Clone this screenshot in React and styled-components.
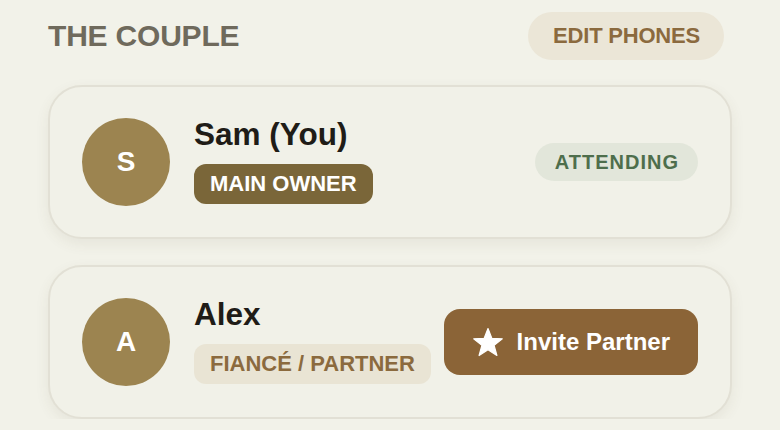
import React from 'react'
import styled, { createGlobalStyle } from 'styled-components'

const Global = createGlobalStyle`
  html, body {
    margin: 0;
    background: #f2f2e9;
    font-family: "Liberation Sans", Arial, sans-serif;
  }
`

const Page = styled.div`
  padding: 12px 48px 0;
`

const Header = styled.div`
  display: flex;
  align-items: center;
  justify-content: space-between;
  height: 48px;
  padding-right: 8px;
  margin-bottom: 25px;
`

const Title = styled.h2`
  margin: 0;
  font-size: 30px;
  font-weight: 700;
  letter-spacing: -0.2px;
  color: #6f6a5c;
`

const EditButton = styled.button`
  height: 48px;
  padding: 0 24px 0 25px;
  border: none;
  border-radius: 24px;
  background: #ebe6d7;
  color: #8b6a3e;
  font-family: inherit;
  font-size: 22px;
  font-weight: 700;
  letter-spacing: -0.2px;
  cursor: pointer;
`

const List = styled.div`
  display: flex;
  flex-direction: column;
  gap: 26px;
`

const Card = styled.div`
  display: flex;
  align-items: center;
  padding: 29px 32px;
  border: 2px solid #e2e0d5;
  border-radius: 34px;
  background: #f1f1e8;
  box-shadow: 0 5px 14px rgba(90, 80, 50, 0.08);
`

const Avatar = styled.div`
  flex: none;
  width: 88px;
  height: 88px;
  border-radius: 50%;
  background: #9c8450;
  color: #fff;
  display: flex;
  align-items: center;
  justify-content: center;
  font-size: 28px;
  font-weight: 700;
`

const Info = styled.div`
  flex: 1;
  margin-left: 24px;
  padding-bottom: 4px;
  display: flex;
  flex-direction: column;
  align-items: flex-start;
  gap: 12px;
`

const Name = styled.div`
  font-size: 31.5px;
  line-height: 36px;
  font-weight: 700;
  color: #1f1c17;
`

const Role = styled.span`
  height: 40px;
  padding: 0 16px;
  border-radius: 12px;
  display: flex;
  align-items: center;
  font-size: 22px;
  font-weight: 700;
  background: ${({ $owner }) => ($owner ? '#7a6639' : '#e9e4d4')};
  color: ${({ $owner }) => ($owner ? '#fff' : '#8b6a3e')};
`

const Status = styled.span`
  height: 38px;
  padding: 0 19px 0 20px;
  border-radius: 19px;
  display: flex;
  align-items: center;
  background: #e2e6da;
  color: #4e6e4c;
  font-size: 20px;
  font-weight: 700;
  letter-spacing: 1px;
`

const InviteButton = styled.button`
  height: 66px;
  padding: 0 28px;
  border: none;
  border-radius: 16px;
  background: #8b6437;
  color: #fff;
  display: flex;
  align-items: center;
  gap: 13px;
  font-family: inherit;
  font-size: 24px;
  font-weight: 700;
  cursor: pointer;
`

const Star = () => (
  <svg width="32" height="30" viewBox="0 0 32 30">
    <polygon
      points="16,1.5 19.8,11.3 30.3,11.8 22.1,18.4 24.9,28.5 16,22.8 7.1,28.5 9.9,18.4 1.7,11.8 12.2,11.3"
      fill="#fff"
      stroke="#fff"
      strokeWidth="1.2"
      strokeLinejoin="round"
    />
  </svg>
)

const Member = ({ initial, name, role, owner, children }) => (
  <Card>
    <Avatar>{initial}</Avatar>
    <Info>
      <Name>{name}</Name>
      <Role $owner={owner}>{role}</Role>
    </Info>
    {children}
  </Card>
)

export default function App() {
  return (
    <Page>
      <Global />
      <Header>
        <Title>THE COUPLE</Title>
        <EditButton>EDIT PHONES</EditButton>
      </Header>
      <List>
        <Member initial="S" name="Sam (You)" role="MAIN OWNER" owner>
          <Status>ATTENDING</Status>
        </Member>
        <Member initial="A" name="Alex" role="FIANCÉ / PARTNER">
          <InviteButton>
            <Star />
            Invite Partner
          </InviteButton>
        </Member>
      </List>
    </Page>
  )
}
